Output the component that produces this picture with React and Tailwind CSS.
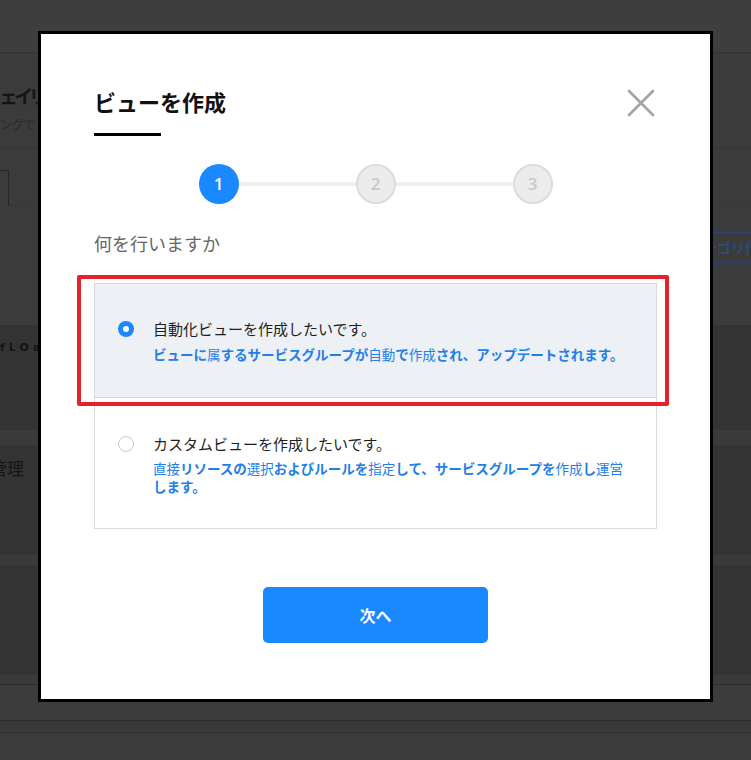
import React from 'react';

const JP = "font-['Noto_Sans_CJK_JP','Noto_Sans',sans-serif]";

// kana runs are heavier than kanji runs in the original rendering
function Mixed({ text }) {
  const parts = text.match(/[\u4e00-\u9fff]+|[^\u4e00-\u9fff]+/g) || [];
  return parts.map((p, i) =>
    /[\u4e00-\u9fff]/.test(p) ? (
      <span key={i} className="font-normal">{p}</span>
    ) : (
      <span key={i} className="font-bold">{p}</span>
    )
  );
}

function Step({ n, active }) {
  return (
    <div
      className={
        active
          ? "w-[40px] h-[40px] rounded-full bg-[#1a88ff] flex items-center justify-center text-white text-[17px] font-semibold font-['Open_Sans',sans-serif]"
          : "w-[40px] h-[40px] rounded-full bg-[#ececec] border-[2px] border-[#dcdcdc] flex items-center justify-center text-[#c9c9c9] text-[17px] font-semibold font-['Open_Sans',sans-serif]"
      }
    >
      {n}
    </div>
  );
}

function Option({ checked, title, desc, first }) {
  return (
    <div
      className={
        first
          ? 'border border-[#d9d9d9] bg-[#edf1f5] pt-[34px] pb-[34px] pl-[23px] pr-[23px] flex gap-[19px]'
          : 'border-x border-b border-[#dcdcdc] bg-white pt-[35px] pb-[33px] pl-[23px] pr-[23px] flex gap-[19px]'
      }
    >
      <div className="h-[22px] w-[16px] flex items-center shrink-0">
        {checked ? (
          <div className="w-[16px] h-[16px] rounded-full bg-[#1a88ff] flex items-center justify-center">
            <div className="w-[6px] h-[6px] rounded-full bg-white" />
          </div>
        ) : (
          <div className="w-[16px] h-[16px] rounded-full bg-white border border-[#c8c8c8]" />
        )}
      </div>
      <div className="flex-1">
        <div className="text-[15px] leading-[22px] text-[#1e1e1e]">{title}</div>
        <div className={(first ? 'mt-[5px]' : 'mt-[4px]') + ' text-[13.5px] leading-[18px] text-[#1f80e8]'}>
          <Mixed text={desc} />
        </div>
      </div>
    </div>
  );
}

export default function App() {
  return (
    <div className={`relative w-[751px] h-[760px] overflow-hidden bg-[#3b3b3b] ${JP}`}>
      {/* dimmed page behind the dialog */}
      <div className="flex flex-col">
        <div className="h-[53px] bg-[#3e3e3e] border-b border-[#343434]" />
        <div className="h-[95px] border-b border-[#343434] pt-[30px]">
          <div className="text-[19px] leading-[26px] font-bold tracking-[-2px] text-[#151515] [font-feature-settings:'palt']">ェイリアス</div>
          <div className="mt-[6px] text-[13px] leading-[18px] text-[#2c2c2c] [font-feature-settings:'palt']">ングで</div>
        </div>
        <div className="mt-[22px] flex h-[36px]">
          <div className="w-[9px] border-t border-r border-[#262626]" />
          <div className="flex-1 border-b border-[#2f3a48]" />
        </div>
        <div className="mt-[26px] flex justify-end h-[31px]">
          <div className="-mr-[31px] border border-[#27466f] px-[8px] text-[14px] leading-[29px] font-bold text-[#2a4c78]">カテゴリ作成</div>
        </div>
        <div className="mt-[62px] h-[105px] bg-[#333333] pt-[15px]">
          <div className="text-[11px] tracking-[4px] font-bold text-[#141414] font-['DejaVu_Sans',sans-serif]">fLOaTING</div>
        </div>
        <div className="h-[15px] bg-[#3a3a3a]" />
        <div className="h-[110px] bg-[#333333] pt-[11px]">
          <div className="-ml-[10px] text-[17px] leading-[24px] text-[#141414]">管理</div>
        </div>
        <div className="h-[10px] bg-[#3a3a3a]" />
        <div className="h-[110px] bg-[#333333]" />
        <div className="h-[10px] bg-[#3a3a3a] border-b border-[#2e2e2e]" />
        <div className="h-[36px] bg-[#3c3c3c] border-b border-[#2e2e2e]" />
        <div className="h-[12px] bg-[#393939] border-b border-[#2e2e2e]" />
      </div>

      {/* dialog */}
      <div className="absolute left-[38px] top-[31px] w-[675px] h-[671px] bg-white border-[3px] border-black">
        <div className="pt-[51px] px-[53px]">
          <div className="flex justify-between items-start">
            <h2 className="text-[22px] leading-[32px] font-bold text-[#111]">ビューを作成</h2>
            <svg className="mt-[4px] mr-[2px]" width="28" height="28" viewBox="0 0 28 28">
              <path d="M2 2L26 26M26 2L2 26" stroke="#a3a3a3" strokeWidth="2.6" strokeLinecap="round" />
            </svg>
          </div>
          <div className="mt-[16px] h-[3px] w-[67px] bg-black" />

          <div className="mt-[28px] flex justify-center items-center">
            <Step n={1} active />
            <div className="w-[117px] h-[4px] bg-[#eeeeee]" />
            <Step n={2} />
            <div className="w-[117px] h-[4px] bg-[#eeeeee]" />
            <Step n={3} />
          </div>

          <div className="mt-[27px] text-[18px] leading-[24px] text-[#666]">何を行いますか</div>

          <div className="mt-[28px]">
            <Option
              first
              checked
              title="自動化ビューを作成したいです。"
              desc="ビューに属するサービスグループが自動で作成され、アップデートされます。"
            />
            <Option
              title="カスタムビューを作成したいです。"
              desc="直接リソースの選択およびルールを指定して、サービスグループを作成し運営します。"
            />
          </div>

          <button className="mt-[58px] mx-auto flex items-center justify-center w-[225px] h-[56px] rounded-[5px] bg-[#1a88ff] text-white text-[16px] font-bold">
            次へ
          </button>
        </div>
      </div>

      {/* annotation highlight */}
      <div className="absolute left-[77px] top-[275px] w-[592px] h-[131px] border-[4px] border-[#e8202a] rounded-[2px]" />
    </div>
  );
}
